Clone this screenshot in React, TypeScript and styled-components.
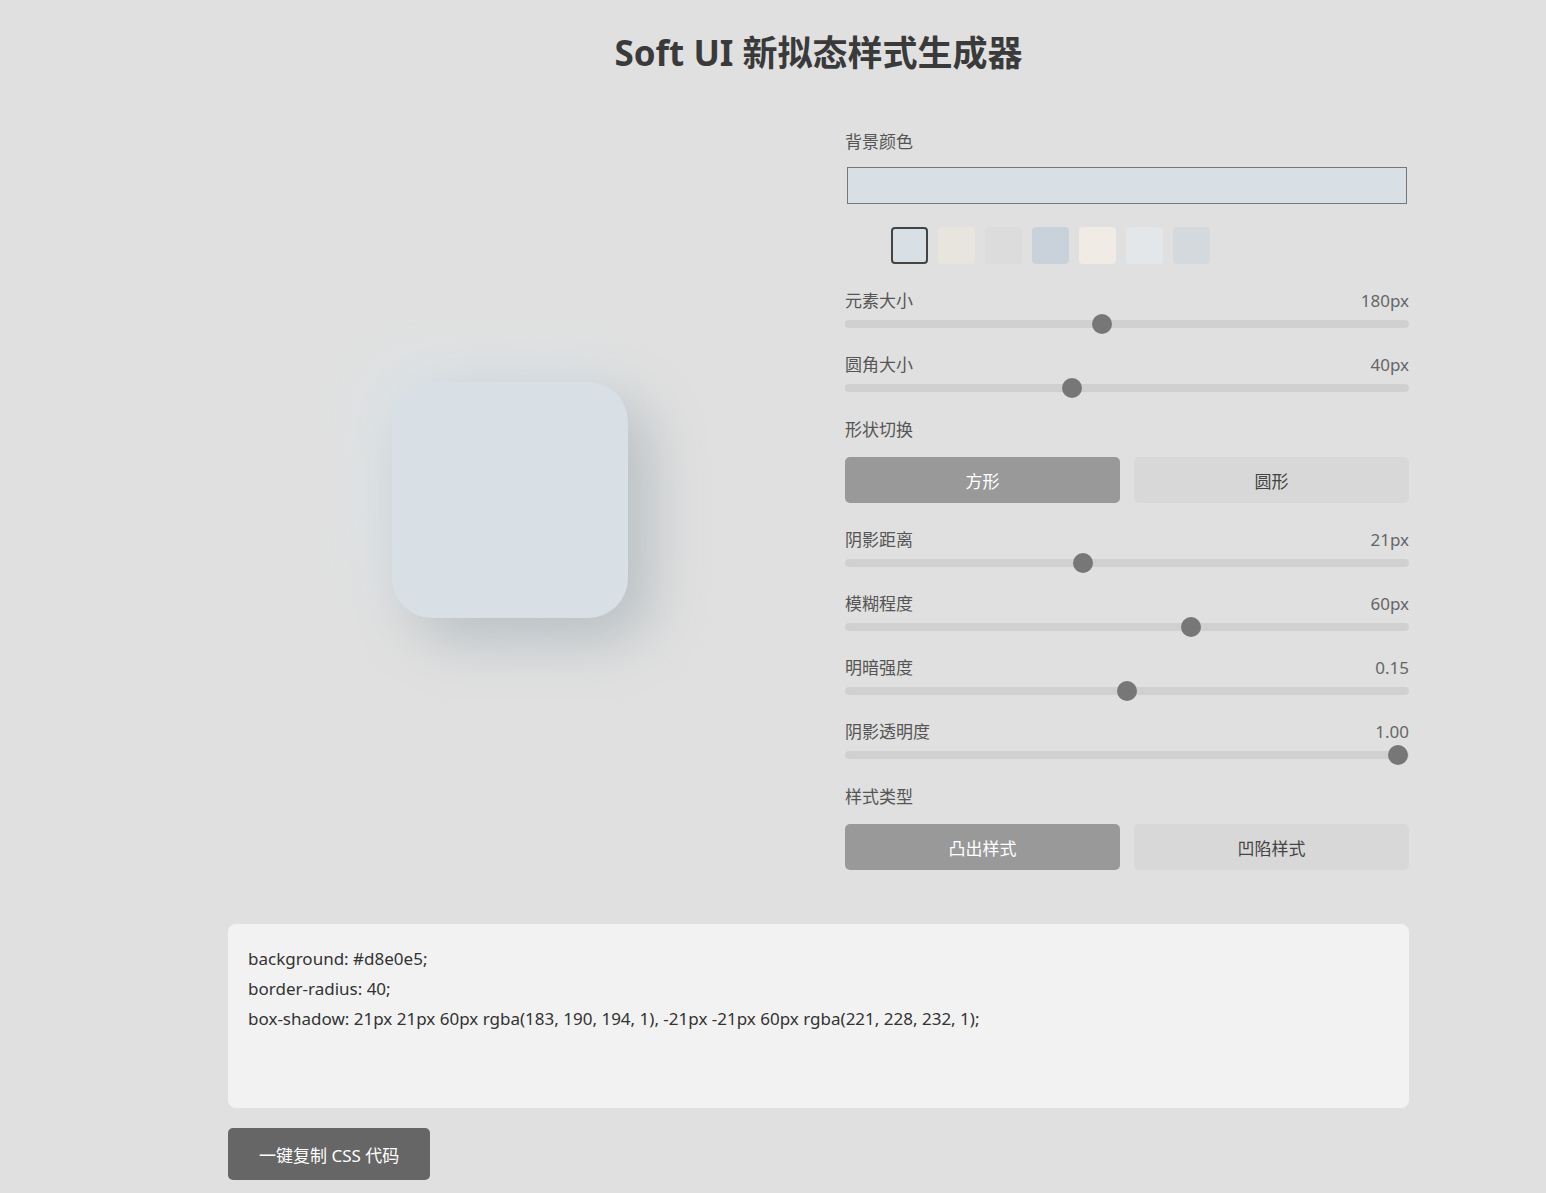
import styled, { createGlobalStyle } from 'styled-components'

const Global = createGlobalStyle`
  body {
    margin: 0;
    background: #e0e0e0;
    font-family: "Noto Sans", "Noto Sans CJK SC", sans-serif;
    color: #444;
  }
`

const Page = styled.div`
  width: 1181px;
  margin: 0 0 0 228px;
  padding: 28px 0 14px;
`

const Title = styled.h1`
  margin: 0 0 51px;
  text-align: center;
  font-size: 35px;
  font-weight: 700;
  color: #3a3a3a;
  line-height: 50px;
`

const Main = styled.div`
  display: grid;
  grid-template-columns: 564px 564px;
  column-gap: 53px;
`

const Preview = styled.div`
  display: flex;
  align-items: center;
  justify-content: center;
`

const Element = styled.div`
  width: 236px;
  height: 236px;
  border-radius: 40px;
  background: #d8e0e5;
  box-shadow: 21px 21px 60px rgba(183, 190, 194, 1), -21px -21px 60px rgba(221, 228, 232, 1);
`

const Controls = styled.div`
  display: flex;
  flex-direction: column;
`

const Label = styled.div`
  font-size: 17px;
  line-height: 26px;
  color: #555;
  display: flex;
  justify-content: space-between;
`

const Value = styled.span`
  color: #666;
`

const ColorInput = styled.div`
  margin: 12px 2px 0;
  height: 35px;
  border: 1px solid #777;
  background: #d8e0e5;
`

const Swatches = styled.div`
  display: flex;
  gap: 10px;
  padding-left: 46px;
  margin-top: 23px;
`

const Swatch = styled.div<{ $c: string; $active?: boolean }>`
  width: 37px;
  height: 37px;
  border-radius: 4px;
  box-sizing: border-box;
  background: ${({ $c }) => $c};
  border: ${({ $active }) => ($active ? '2px solid #444' : 'none')};
`

const SliderBlock = styled.div`
  margin-top: 24px;
`

const Track = styled.div`
  position: relative;
  height: 8px;
  border-radius: 4px;
  background: #d0d0d0;
  margin-top: 6px;
`

const Thumb = styled.div`
  position: absolute;
  top: -6px;
  width: 20px;
  height: 20px;
  margin-left: -10px;
  border-radius: 50%;
  background: #777;
`

const Section = styled.div`
  margin-top: 25px;
`

const ToggleRow = styled.div`
  display: grid;
  grid-template-columns: 1fr 1fr;
  gap: 14px;
  margin-top: 14px;
`

const Toggle = styled.div<{ $active?: boolean }>`
  height: 46px;
  border-radius: 5px;
  display: flex;
  align-items: center;
  justify-content: center;
  font-size: 17px;
  background: ${({ $active }) => ($active ? '#999' : '#d8d8d8')};
  color: ${({ $active }) => ($active ? '#fff' : '#444')};
`

const Code = styled.div`
  margin-top: 54px;
  height: 184px;
  box-sizing: border-box;
  background: #f2f2f2;
  border-radius: 8px;
  padding: 20px 20px;
  font-size: 17px;
  line-height: 30px;
  color: #333;
`

const CopyButton = styled.div`
  display: inline-flex;
  align-items: center;
  margin-top: 20px;
  height: 52px;
  padding: 0 31px;
  border-radius: 5px;
  background: #666;
  color: #fff;
  font-size: 17px;
`

function Slider({ label, value, pos }: { label: string; value: string; pos: number }) {
  return (
    <SliderBlock>
      <Label>
        <span>{label}</span>
        <Value>{value}</Value>
      </Label>
      <Track>
        <Thumb style={{ left: `${10 + pos * 544}px` }} />
      </Track>
    </SliderBlock>
  )
}

const swatches = ['#d8e0e5', '#e8e4de', '#dcdcdc', '#c9d2da', '#f0ebe5', '#e4e7ea', '#d4d9dd']

export default function App() {
  return (
    <>
      <Global />
      <Page>
        <Title>Soft UI 新拟态样式生成器</Title>
        <Main>
          <Preview>
            <Element />
          </Preview>
          <Controls>
            <Label>背景颜色</Label>
            <ColorInput />
            <Swatches>
              {swatches.map((c, i) => (
                <Swatch key={c} $c={c} $active={i === 0} />
              ))}
            </Swatches>
            <Slider label="元素大小" value="180px" pos={0.454} />
            <Slider label="圆角大小" value="40px" pos={0.399} />
            <Section>
              <Label>形状切换</Label>
              <ToggleRow>
                <Toggle $active>方形</Toggle>
                <Toggle>圆形</Toggle>
              </ToggleRow>
            </Section>
            <Slider label="阴影距离" value="21px" pos={0.419} />
            <Slider label="模糊程度" value="60px" pos={0.618} />
            <Slider label="明暗强度" value="0.15" pos={0.5} />
            <Slider label="阴影透明度" value="1.00" pos={0.998} />
            <Section>
              <Label>样式类型</Label>
              <ToggleRow>
                <Toggle $active>凸出样式</Toggle>
                <Toggle>凹陷样式</Toggle>
              </ToggleRow>
            </Section>
          </Controls>
        </Main>
        <Code>
          <div>background: #d8e0e5;</div>
          <div>border-radius: 40;</div>
          <div>box-shadow: 21px 21px 60px rgba(183, 190, 194, 1), -21px -21px 60px rgba(221, 228, 232, 1);</div>
        </Code>
        <CopyButton>一键复制 CSS 代码</CopyButton>
      </Page>
    </>
  )
}
